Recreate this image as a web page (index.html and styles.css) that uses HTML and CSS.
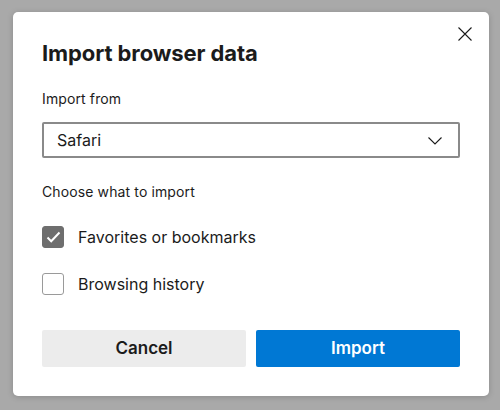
FILE: index.html
```html
<!DOCTYPE html>
<html lang="en">
<head>
<meta charset="utf-8">
<title>Import browser data</title>
<link rel="stylesheet" href="styles.css">
</head>
<body>
<div class="dialog" role="dialog" aria-labelledby="dlg-title">
  <button class="close" aria-label="Close">
    <svg width="14" height="14" viewBox="0 0 14 14"><path d="M0.5 0.5L13.5 13.5M13.5 0.5L0.5 13.5" stroke="#1a1a1a" stroke-width="1.1" fill="none"/></svg>
  </button>
  <h1 class="title" id="dlg-title">Import browser data</h1>
  <div class="label">Import from</div>
  <div class="select">
    <span class="select-value">Safari</span>
    <svg class="chevron" width="14" height="8" viewBox="0 0 14 8"><path d="M0.5 0.5L7 7L13.5 0.5" stroke="#1a1a1a" stroke-width="1.1" fill="none"/></svg>
  </div>
  <div class="label label-choose">Choose what to import</div>
  <div class="options">
    <label class="option">
      <span class="box checked">
        <svg width="15" height="12" viewBox="0 0 15 12"><path d="M1.5 6.5L5.2 10.2L13.5 1.5" stroke="#fff" stroke-width="2" fill="none"/></svg>
      </span>
      <span class="option-text">Favorites or bookmarks</span>
    </label>
    <label class="option">
      <span class="box"></span>
      <span class="option-text">Browsing history</span>
    </label>
  </div>
  <div class="actions">
    <button class="btn btn-secondary">Cancel</button>
    <button class="btn btn-primary">Import</button>
  </div>
</div>
</body>
</html>
```
FILE: styles.css
```css
* { box-sizing: border-box; }
html, body { margin: 0; padding: 0; }
body {
  background: #a9a9a9;
  font-family: Inter, "Noto Sans", "Liberation Sans", sans-serif;
  color: #1b1b1b;
  width: 500px;
  height: 410px;
  padding: 12px 0 0 13px;
}
.dialog {
  position: relative;
  width: 476px;
  height: 384px;
  background: #fff;
  border-radius: 5px;
  box-shadow: 0 1px 6px rgba(0,0,0,0.18);
  padding: 27px 29px 29px 29px;
  display: flex;
  flex-direction: column;
}
.close {
  position: absolute;
  top: 15px;
  left: 445px;
  width: 14px;
  height: 14px;
  padding: 0;
  border: 0;
  background: none;
  display: flex;
}
.title {
  margin: 0;
  font-size: 22px;
  line-height: 28px;
  font-weight: 700;
  letter-spacing: -0.1px;
}
.label {
  margin-top: 22px;
  font-size: 14px;
  line-height: 20px;
  letter-spacing: 0.12px;
}
.label-choose { margin-top: 23.6px; }
.select {
  margin-top: 13px;
  height: 36px;
  border: 2px solid #8a8a8a;
  border-radius: 2px;
  display: flex;
  align-items: center;
  justify-content: space-between;
  padding: 0 16px 0 13px;
  font-size: 16px;
}
.chevron { margin-top: 2px; }
.options {
  margin-top: 24.4px;
  display: flex;
  flex-direction: column;
  gap: 25px;
}
.option {
  display: flex;
  align-items: center;
  gap: 14px;
  height: 22px;
  font-size: 16px;
  line-height: 22px;
}
.box {
  width: 22px;
  height: 22px;
  border: 1px solid #9a9a9a;
  border-radius: 3px;
  display: flex;
  align-items: center;
  justify-content: center;
}
.box.checked {
  background: #6e6e6e;
  border-color: #6e6e6e;
}
.actions {
  margin-top: 35px;
  display: flex;
  gap: 10px;
}
.btn {
  flex: 1;
  height: 37px;
  border: 0;
  border-radius: 2px;
  font-family: inherit;
  font-size: 17px;
  font-weight: 600;
}
.btn-secondary { background: #ececec; color: #1b1b1b; }
.btn-primary { background: #0078d4; color: #fff; }
```
